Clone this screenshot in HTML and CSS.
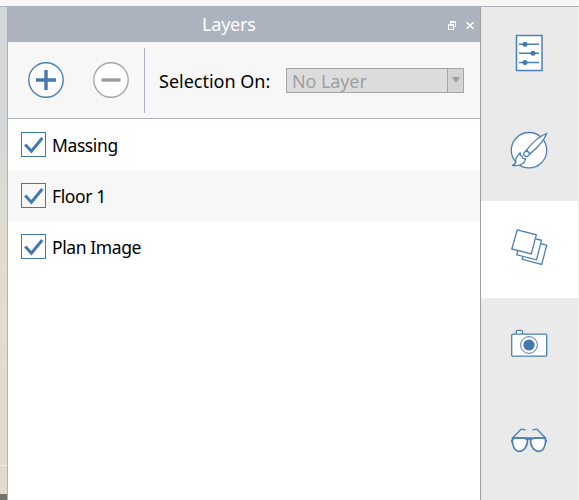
FILE: index.html
```html
<!DOCTYPE html>
<html lang="en">
<head>
<meta charset="utf-8">
<title>Layers</title>
<link rel="stylesheet" href="styles.css">
</head>
<body>
<div class="topbar"></div>
<div class="workspace">
  <div class="canvas-edge"><div class="ground"></div><div class="shade"></div></div>
  <main class="panel">
    <header class="titlebar">
      <h1>Layers</h1>
      <div class="window-actions">
        <svg width="8" height="9" viewBox="0 0 8 9" shape-rendering="crispEdges"><path fill="#fff" d="M2 0h6v6H6V5h1V2H3v1H2zM0 3h6v6H0zM1 5v3h4V5z" fill-rule="evenodd"/></svg>
        <svg width="8" height="7" viewBox="0 0 8 7"><path d="M.5.3 7.5 6.7M7.5.3.5 6.7" stroke="#fff" stroke-width="1.5"/></svg>
      </div>
    </header>
    <div class="toolbar">
      <svg class="add" width="36" height="36" viewBox="0 0 36 36"><circle cx="18" cy="18" r="17.2" fill="#fff" stroke="#4a80b5" stroke-width="1.4"/><path d="M8 18h20M18 8v20" stroke="#4379af" stroke-width="3.4"/></svg>
      <svg class="remove" width="36" height="36" viewBox="0 0 36 36"><circle cx="18" cy="18" r="17.2" fill="#fff" stroke="#a7a7a7" stroke-width="1.4"/><path d="M8.5 18h19" stroke="#a0a0a0" stroke-width="3.4"/></svg>
      <div class="divider"></div>
      <span class="label">Selection On:</span>
      <div class="select"><span class="value">No Layer</span><span class="arrow"><svg width="8" height="6" viewBox="0 0 8 6"><path d="M0 0h8L4 6z" fill="#9c9c9c"/></svg></span></div>
    </div>
    <ul class="layers">
      <li><span class="check"><svg width="23" height="23" viewBox="0 0 23 23"><path d="m3.2 11.5 6.2 6.8L20.3 5" /></svg></span><span class="name">Massing</span></li>
      <li><span class="check"><svg width="23" height="23" viewBox="0 0 23 23"><path d="m3.2 11.5 6.2 6.8L20.3 5" /></svg></span><span class="name">Floor 1</span></li>
      <li><span class="check"><svg width="23" height="23" viewBox="0 0 23 23"><path d="m3.2 11.5 6.2 6.8L20.3 5" /></svg></span><span class="name">Plan Image</span></li>
    </ul>
  </main>
  <nav class="tabs">
    <div class="tab"><svg viewBox="0 0 40 40"><path class="w" d="M7.5 2.500h25.500v35h-25.500z" stroke-width="1.5"/><path d="M10 11.3h20M10 20.3h20M10 29.5h20" stroke-width="1.4"/><g class="solid"><circle cx="16" cy="11.3" r="2.5"/><circle cx="24" cy="20.3" r="2.5"/><circle cx="16" cy="29.5" r="2.5"/></g></svg></div>
    <div class="tab"><svg viewBox="0 0 40 40"><circle class="w" cx="20" cy="20.2" r="17.7"/><path class="w" d="M17.5 20.200C23 13 31 6 37.500 3.500 35.500 10 28 18 20.800 24z"/><path class="w" d="m17.500 20.200 3.500 3.800-2.500 2.500c-2 .8-4.600-1.600-3.700-3.500z"/><path class="w" d="M11.300 22.300C9 26 5.800 27.500 6.800 31c.4 2.300-1.200 3.500-3.500 4.500 5.500.5 12.500-.5 13.300-7-2.400.6-3.800-.3-3.500-2.400-1.700-.3-2.100-1.800-1.800-3.800z"/></svg></div>
    <div class="tab active"><svg viewBox="0 0 40 40"><path class="w" d="m17.700 13 20 5.200-5 19.200-19.400-5z"/><path class="w" d="m12.500 8.3 20 5-5 19.500-19.700-5z"/><path class="w" d="m8.3 2.800 19 5-5 19.200-19.500-5z"/></svg></div>
    <div class="tab"><svg viewBox="0 0 40 40"><path class="w" d="M7.200 10.500V8q0-1.700 1.700-1.700h3q1.700 0 1.700 1.700v2.500"/><rect class="w" x="2.700" y="10.200" width="35" height="22" rx="1"/><circle cx="20" cy="21" r="8.400" stroke-width="1"/><circle class="solid" cx="20" cy="21" r="5.600"/></svg></div>
    <div class="tab"><svg viewBox="0 0 40 40"><path d="M3.500 17 12 8.200q.5-.5 4.500 1M36.500 17 28 8.200q-.5-.5-4.500 1"/><path class="w" d="M3.500 17.700q7.500-2 15 .5c.5 6-3 12-8.500 12.100-4.500 0-7.300-6.600-6.500-12.600zM36.500 17.700q-7.500-2-15 .5c-.5 6 3 12 8.500 12.100 4.500 0 7.300-6.600 6.500-12.600z" stroke-width="1.700"/><path d="M2.800 17h34.400M17 18.500q3-1.200 6 0M2.700 19v2M37.300 19v2" stroke-width="1.500"/></svg></div>
  </nav>
</div>
</body>
</html>
```
FILE: styles.css
```css
* { box-sizing: border-box; }
body {
  margin: 0;
  width: 579px;
  height: 500px;
  overflow: hidden;
  display: flex;
  flex-direction: column;
  background: #fff;
  font-family: "Noto Sans", "Open Sans", sans-serif;
  color: #000;
}
.topbar { height: 7px; flex: none; background: #f7f7f7; border-bottom: 1px solid #acb3be; }
.workspace { flex: 1; min-height: 0; display: flex; }
.canvas-edge {
  width: 8px;
  flex: none;
  display: flex;
  flex-direction: column;
  justify-content: flex-end;
  border-right: 1px solid #acb3be;
  background: linear-gradient(#d3d7d9 0, #d3d7d9 120px, #dddbd2 190px, #e2dcd0 270px, #e4dacf 100%);
}
.ground { height: 29px; background: #e0dbd0; border-top: 1px solid #f4efe5; }
.shade { height: 6px; background: #73736a; }
.panel { width: 473px; flex: none; border-right: 1px solid #a0a0a0; background: #fff; }
.titlebar { height: 35px; display: flex; align-items: center; background: #acb3be; color: #fff; }
.titlebar h1 {
  margin: 0 0 0 194px;
  font-size: 18px;
  line-height: 35px;
  font-weight: 400;
  letter-spacing: -0.2px;
}
.window-actions { display: flex; align-items: center; gap: 10px; margin: 2px 6px 0 auto; }
.window-actions svg { display: block; }
.toolbar {
  height: 77px;
  display: flex;
  align-items: center;
  background: #f7f7f7;
  border-bottom: 1px solid #acb3be;
}
.toolbar > * { flex: none; }
.add { margin-left: 20px; }
.remove { margin-left: 29px; }
.divider { width: 1px; height: 65px; margin-left: 15px; background: #acb3be; }
.label { width: 141px; padding-left: 14px; font-size: 18px; line-height: 28px; white-space: nowrap; margin-top: 1px; }
.select {
  width: 178px;
  height: 25px;
  display: flex;
  margin-top: 1px;
  border: 1px solid #a5a5a5;
  background: #dcdcdc;
  color: #a0a0a0;
}
.value { flex: 1; padding-left: 5px; font-size: 18px; line-height: 25px; letter-spacing: -0.1px; }
.arrow { width: 16px; display: grid; place-items: center; border-left: 1px solid #a5a5a5; background: #d4d4d4; }
.arrow svg { display: block; margin-top: -2px; }
.layers { margin: 0; padding: 0; list-style: none; }
.layers li { height: 51px; padding-left: 13px; display: flex; align-items: center; }
.layers li:nth-child(even) { background: #f7f7f7; }
.check { width: 25px; height: 25px; border: 1px solid #4379af; }
.check svg { display: block; }
.check path { fill: none; stroke: #4379af; stroke-width: 3; }
.name { margin: 2px 0 0 6px; font-size: 17.5px; line-height: 25px; letter-spacing: -0.4px; white-space: nowrap; }
.tabs { width: 98px; flex: none; border-right: 1px solid #f0f0f0; background: #eaeaea; }
.tab { height: 97px; display: flex; align-items: center; justify-content: center; }
.tab.active { background: #fff; }
.tab svg { width: 40px; height: 40px; margin: -5px 1px 0 0; fill: none; stroke: #4a80b5; stroke-width: 1.3; }
.tab .w { fill: #fff; }
.tab .solid { fill: #4379af; stroke: none; }
```
